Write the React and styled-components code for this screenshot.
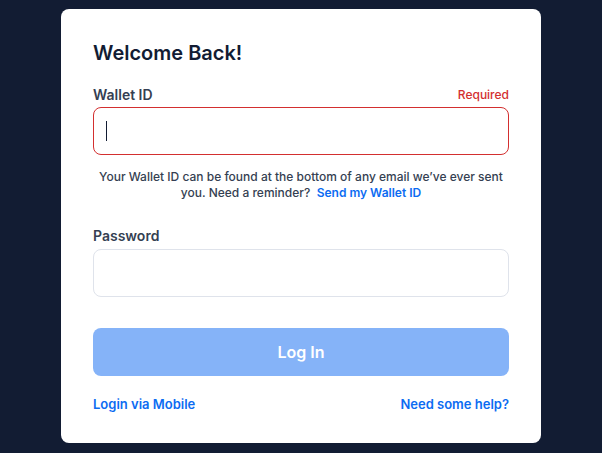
import React from 'react';
import styled, {createGlobalStyle} from "styled-components";

const GlobalStyle = createGlobalStyle`
    html, body {
        margin: 0;
        padding: 0;
        background: #121c33;
    }
    body {
        font-family: Inter, "Noto Sans", sans-serif;
        -webkit-font-smoothing: antialiased;
    }
`;

const Page = styled.div`
    width: 100%;
    min-height: 453px;
    display: flex;
    justify-content: center;
    align-items: flex-start;
    padding-top: 9px;
    box-sizing: border-box;
`;

const Card = styled.div`
    width: 480px;
    background: #ffffff;
    border-radius: 8px;
    padding: 32px 32px 27px;
    box-sizing: border-box;
    display: flex;
    flex-direction: column;
`;

const Title = styled.h1`
    margin: 0 0 19px;
    font-size: 20px;
    line-height: 24px;
    font-weight: 600;
    color: #121c33;
`;

const LabelRow = styled.div`
    display: flex;
    justify-content: space-between;
    align-items: center;
    height: 20px;
    margin-bottom: ${({gap}) => gap || '3px'};
`;

const Label = styled.label`
    font-size: 14px;
    font-weight: 600;
    color: #353f52;
`;

const Required = styled.span`
    font-size: 12px;
    font-weight: 500;
    color: #d32f2f;
`;

const Input = styled.div`
    height: 48px;
    box-sizing: border-box;
    border: 1px solid ${({error}) => error ? '#d32f2f' : '#dfe3eb'};
    border-radius: 8px;
    padding: 0 12px;
    display: flex;
    align-items: center;
`;

const Caret = styled.span`
    width: 1px;
    height: 20px;
    background: #121c33;
`;

const Helper = styled.p`
    margin: 14px 0 0;
    font-size: 12px;
    line-height: 16px;
    font-weight: 500;
    color: #353f52;
    text-align: center;
`;

const Link = styled.a`
    color: #0c6cf2;
    font-weight: 600;
    font-size: ${({size}) => size || '12px'};
    text-decoration: none;
    cursor: pointer;
`;

const Field = styled.div`
    margin-top: ${({top}) => top || '0'};
`;

const Button = styled.button`
    margin-top: 31px;
    height: 48px;
    width: 100%;
    border: none;
    border-radius: 8px;
    background: #85b3f8;
    color: #ffffff;
    font-family: Inter, "Noto Sans", sans-serif;
    font-size: 16px;
    font-weight: 600;
`;

const Footer = styled.div`
    margin-top: 16px;
    display: flex;
    justify-content: space-between;
    align-items: center;
    height: 24px;
`;

function App() {
    return (
        <>
            <GlobalStyle/>
            <Page>
                <Card>
                    <Title>Welcome Back!</Title>
                    <Field>
                        <LabelRow>
                            <Label>Wallet ID</Label>
                            <Required>Required</Required>
                        </LabelRow>
                        <Input error>
                            <Caret/>
                        </Input>
                        <Helper>
                            Your Wallet ID can be found at the bottom of any email we’ve ever sent you. Need a reminder?&nbsp; <Link>Send my Wallet ID</Link>
                        </Helper>
                    </Field>
                    <Field top="24px">
                        <LabelRow gap="4px">
                            <Label>Password</Label>
                        </LabelRow>
                        <Input/>
                    </Field>
                    <Button>Log In</Button>
                    <Footer>
                        <Link size="13px">Login via Mobile</Link>
                        <Link size="13px">Need some help?</Link>
                    </Footer>
                </Card>
            </Page>
        </>
    );
}

export default App;
